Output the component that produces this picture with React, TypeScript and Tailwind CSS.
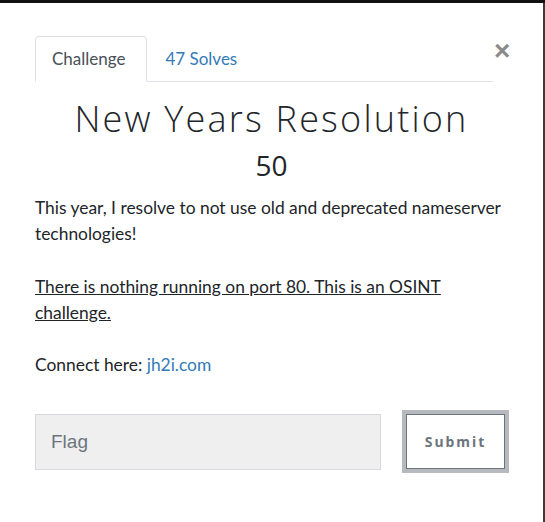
import React, { useState } from 'react';

// Modal de challenge façon CTFd

export default function App() {
  const [tab, setTab] = useState('challenge');
  const [flag, setFlag] = useState('');

  return (
    <div className="w-[545px] h-[522px] flex flex-col bg-[#1c1c1c] overflow-hidden">
      {/* bout de la navbar derrière */}
      <div className="h-[3px] shrink-0 bg-[#111]" />

      <div className="flex flex-1 min-h-0">
        <div className="flex-1 bg-white font-['Lato','Noto_Sans',sans-serif] text-[#212529]">
          {/* onglets */}
          <div className="flex items-start pt-[33px] pl-[35px]">
            <ul className="flex w-[458px] border-b border-[#dee2e6]">
              <li>
                <button
                  onClick={() => setTab('challenge')}
                  className={
                    tab === 'challenge'
                      ? 'block h-[46px] pl-[16px] pr-[21px] -mb-px border border-[#dee2e6] border-b-white rounded-t bg-white text-[17px] text-[#495057]'
                      : 'block h-[46px] pl-[16px] pr-[21px] -mb-px border border-transparent text-[17px] text-[#337ab7]'
                  }
                >
                  Challenge
                </button>
              </li>
              <li>
                <button
                  onClick={() => setTab('solves')}
                  className={
                    tab === 'solves'
                      ? 'block h-[46px] px-[17px] -mb-px border border-[#dee2e6] border-b-white rounded-t bg-white text-[17px] text-[#495057]'
                      : 'block h-[46px] px-[17px] -mb-px border border-transparent text-[17px] text-[#337ab7]'
                  }
                >
                  47 Solves
                </button>
              </li>
            </ul>
            <button className="ml-[1px] mt-[1px] w-[14px] text-[28px] leading-[28px] font-bold text-[#8a8a8a] font-['Liberation_Sans',sans-serif]">
              ×
            </button>
          </div>

          {/* titre + points */}
          <div className="text-center pt-[16px]">
            <h2 className="font-['Open_Sans',sans-serif] font-light text-[36px] leading-[42px] tracking-[2.2px] text-[#212529]">
              New Years Resolution
            </h2>
            <div className="mt-[8px] font-['Open_Sans',sans-serif] text-[28px] leading-[34px] text-[#212529]">
              50
            </div>
          </div>

          {/* description */}
          <div className="px-[35px] pt-[13px] text-[17.4px] leading-[26px]">
            <p className="mb-[27px]">
              This year, I resolve to not use old and deprecated nameserver technologies!
            </p>
            <p className="mb-[26px] pr-[40px]">
              <u>There is nothing running on port 80. This is an OSINT challenge.</u>
            </p>
            <p>
              Connect here: <a href="#" className="text-[#337ab7]">jh2i.com</a>
            </p>
          </div>

          {/* formulaire flag */}
          <div className="flex items-center pl-[35px] pt-[32px]">
            <input
              value={flag}
              onChange={e => setFlag(e.target.value)}
              placeholder="Flag"
              className="w-[346px] h-[56px] px-[15px] bg-[#efefef] border border-[#d5d9de] text-[19px] text-[#495057] placeholder:text-[#6c757d] font-['Liberation_Sans',sans-serif] outline-none"
            />
            <button className="ml-[21px] w-[107px] h-[63px] border-[4px] border-[#b6babf] bg-white">
              <span className="flex items-center justify-center w-full h-full border border-[#6c757d] text-[14px] font-bold tracking-[2px] text-[#6c757d] font-['Noto_Sans',sans-serif]">
                Submit
              </span>
            </button>
          </div>
        </div>
        <div className="w-[2px] shrink-0 bg-[#3a3a3a]" />
      </div>
    </div>
  );
}
